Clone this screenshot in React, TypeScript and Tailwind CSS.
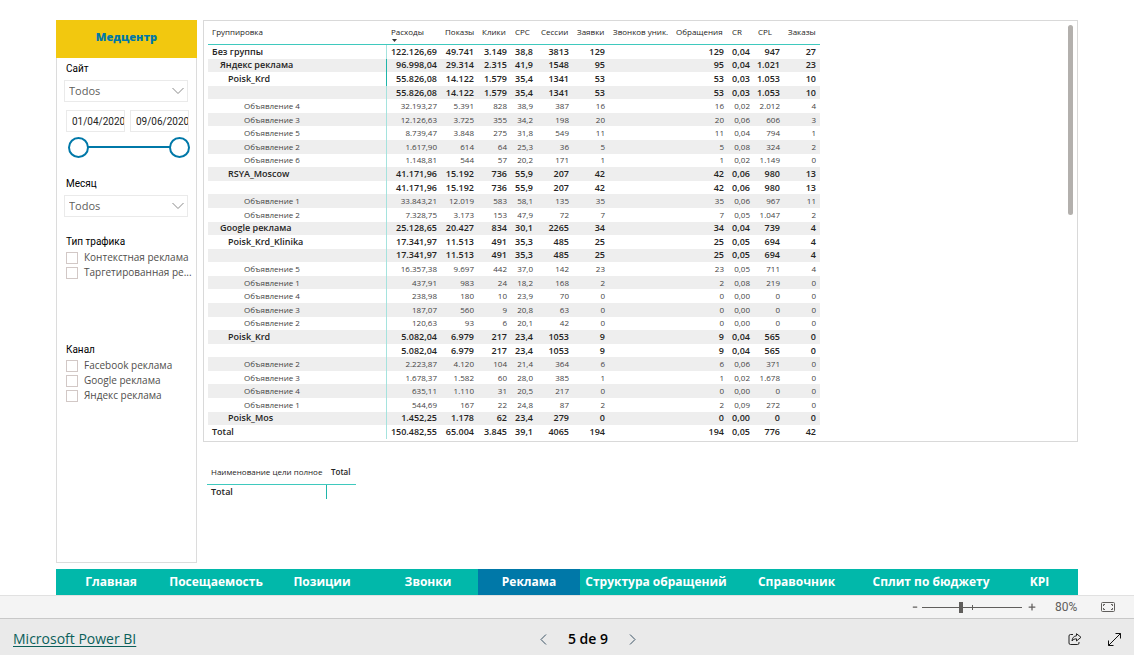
import React, { useState } from 'react';
import clsx from 'clsx';
import { Minus, Plus } from 'lucide-react';

const COLUMNS = [
    'Расходы',
    'Показы',
    'Клики',
    'CPC',
    'Сессии',
    'Заявки',
    'Звонков уник.',
    'Обращения',
    'CR',
    'CPL',
    'Заказы',
];

const COLUMN_WIDTHS = [
    'w-[179px]',
    'w-[54px]',
    'w-[37px]',
    'w-[33px]',
    'w-[26px]',
    'w-[36px]',
    'w-[36px]',
    'w-[63px]',
    'w-[56px]',
    'w-[26px]',
    'w-[30px]',
    'w-[36px]',
];

type Row = { level: number; name: string; values: string };

// level 0..2 are group rows, 3 is an unnamed subtotal, 4 is an ad
const ROWS: Row[] = [
    { level: 0, name: 'Без группы', values: '122.126,69 49.741 3.149 38,8 3813 129 - 129 0,04 947 27' },
    { level: 1, name: 'Яндекс реклама', values: '96.998,04 29.314 2.315 41,9 1548 95 - 95 0,04 1.021 23' },
    { level: 2, name: 'Poisk_Krd', values: '55.826,08 14.122 1.579 35,4 1341 53 - 53 0,03 1.053 10' },
    { level: 3, name: '', values: '55.826,08 14.122 1.579 35,4 1341 53 - 53 0,03 1.053 10' },
    { level: 4, name: 'Объявление 4', values: '32.193,27 5.391 828 38,9 387 16 - 16 0,02 2.012 4' },
    { level: 4, name: 'Объявление 3', values: '12.126,63 3.725 355 34,2 198 20 - 20 0,06 606 3' },
    { level: 4, name: 'Объявление 5', values: '8.739,47 3.848 275 31,8 549 11 - 11 0,04 794 1' },
    { level: 4, name: 'Объявление 2', values: '1.617,90 614 64 25,3 36 5 - 5 0,08 324 2' },
    { level: 4, name: 'Объявление 6', values: '1.148,81 544 57 20,2 171 1 - 1 0,02 1.149 0' },
    { level: 2, name: 'RSYA_Moscow', values: '41.171,96 15.192 736 55,9 207 42 - 42 0,06 980 13' },
    { level: 3, name: '', values: '41.171,96 15.192 736 55,9 207 42 - 42 0,06 980 13' },
    { level: 4, name: 'Объявление 1', values: '33.843,21 12.019 583 58,1 135 35 - 35 0,06 967 11' },
    { level: 4, name: 'Объявление 2', values: '7.328,75 3.173 153 47,9 72 7 - 7 0,05 1.047 2' },
    { level: 1, name: 'Google реклама', values: '25.128,65 20.427 834 30,1 2265 34 - 34 0,04 739 4' },
    { level: 2, name: 'Poisk_Krd_Klinika', values: '17.341,97 11.513 491 35,3 485 25 - 25 0,05 694 4' },
    { level: 3, name: '', values: '17.341,97 11.513 491 35,3 485 25 - 25 0,05 694 4' },
    { level: 4, name: 'Объявление 5', values: '16.357,38 9.697 442 37,0 142 23 - 23 0,05 711 4' },
    { level: 4, name: 'Объявление 1', values: '437,91 983 24 18,2 168 2 - 2 0,08 219 0' },
    { level: 4, name: 'Объявление 4', values: '238,98 180 10 23,9 70 0 - 0 0,00 0 0' },
    { level: 4, name: 'Объявление 3', values: '187,07 560 9 20,8 63 0 - 0 0,00 0 0' },
    { level: 4, name: 'Объявление 2', values: '120,63 93 6 20,1 42 0 - 0 0,00 0 0' },
    { level: 2, name: 'Poisk_Krd', values: '5.082,04 6.979 217 23,4 1053 9 - 9 0,04 565 0' },
    { level: 3, name: '', values: '5.082,04 6.979 217 23,4 1053 9 - 9 0,04 565 0' },
    { level: 4, name: 'Объявление 2', values: '2.223,87 4.120 104 21,4 364 6 - 6 0,06 371 0' },
    { level: 4, name: 'Объявление 3', values: '1.678,37 1.582 60 28,0 385 1 - 1 0,02 1.678 0' },
    { level: 4, name: 'Объявление 4', values: '635,11 1.110 31 20,5 217 0 - 0 0,00 0 0' },
    { level: 4, name: 'Объявление 1', values: '544,69 167 22 24,8 87 2 - 2 0,09 272 0' },
    { level: 2, name: 'Poisk_Mos', values: '1.452,25 1.178 62 23,4 279 0 - 0 0,00 0 0' },
    { level: 0, name: 'Total', values: '150.482,55 65.004 3.845 39,1 4065 194 - 194 0,05 776 42' },
];

const INDENTS = ['pl-1', 'pl-3', 'pl-5', 'pl-7', 'pl-9'];

const PAGES = [
    'Главная',
    'Посещаемость',
    'Позиции',
    'Звонки',
    'Реклама',
    'Структура обращений',
    'Справочник',
    'Сплит по бюджету',
    'KPI',
];

const THUMB =
    '[&::-webkit-slider-thumb]:pointer-events-auto [&::-webkit-slider-thumb]:appearance-none [&::-webkit-slider-thumb]:size-[21px] [&::-webkit-slider-thumb]:rounded-full [&::-webkit-slider-thumb]:border-2 [&::-webkit-slider-thumb]:border-[#0078a8] [&::-webkit-slider-thumb]:bg-white';

function Dropdown({ id, label }: { id: string; label: string }) {
    return (
        <div>
            <label htmlFor={id} className="block pl-[9px] font-[Roboto,sans-serif] text-[10px] leading-[14px] text-black">{label}</label>
            <div className="relative mt-1 ml-[7px] mr-2">
                <select
                    id={id}
                    className="block h-[22px] w-full appearance-none border border-[#eaeaea] bg-white pl-1 text-[11px] leading-5 text-[#605e5c]"
                >
                    <option>Todos</option>
                </select>
                <svg
                    className="pointer-events-none absolute top-[7px] right-1 h-2 w-3"
                    viewBox="0 0 12 8"
                    fill="none"
                    stroke="#8a8a8a"
                >
                    <path d="M0.5 1 L6 6.5 L11.5 1" />
                </svg>
            </div>
        </div>
    );
}

function CheckList({ title, items }: { title: string; items: string[] }) {
    return (
        <fieldset className="min-w-0">
            <legend className="pl-[9px] font-[Roboto,sans-serif] text-[10px] leading-[14px] text-black">{title}</legend>
            <div className="pt-px pr-px pl-[9px]">
                {items.map((item) => (
                    <label key={item} className="flex h-[15px] items-center gap-[6px] text-[10px] leading-[15px] whitespace-nowrap text-[#504e4c]">
                        <input
                            type="checkbox"
                            className="size-3 shrink-0 appearance-none border border-[#d2c8c6] bg-white checked:bg-[#605e5c]"
                        />
                        {item}
                    </label>
                ))}
            </div>
        </fieldset>
    );
}

function DateRange() {
    const [from, setFrom] = useState(0);
    const [to, setTo] = useState(100);

    return (
        <div>
            <div className="flex gap-[5px] pr-[7px] pl-[9px]">
                {['01/04/2020', '09/06/2020'].map((date, i) => (
                    <input
                        key={date}
                        type="text"
                        aria-label={i === 0 ? 'Начало' : 'Конец'}
                        defaultValue={date}
                        className="h-[22px] w-0 min-w-0 flex-1 border border-[#eaeaea] pl-[5px] font-[Roboto,sans-serif] text-[10px] text-[#252423]"
                    />
                ))}
            </div>
            <div className="relative mt-1 mr-[6px] ml-[11px] h-[22px]">
                <div className="absolute inset-x-3 top-[10px] h-[2px] bg-[#0078a8]" />
                <input
                    type="range"
                    aria-label="Начало периода"
                    value={from}
                    onChange={(e) => setFrom(Math.min(Number(e.target.value), to))}
                    className={clsx('pointer-events-none absolute inset-0 w-full appearance-none bg-transparent', THUMB)}
                />
                <input
                    type="range"
                    aria-label="Конец периода"
                    value={to}
                    onChange={(e) => setTo(Math.max(Number(e.target.value), from))}
                    className={clsx('pointer-events-none absolute inset-0 w-full appearance-none bg-transparent', THUMB)}
                />
            </div>
        </div>
    );
}

function Sidebar() {
    return (
        <aside className="flex w-[141px] shrink-0 flex-col border border-t-0 border-[#dcdcdc]">
            <h1 className="-mx-px flex h-[38px] items-center justify-center bg-[#f2c80f] pb-1 text-[11px] font-extrabold text-[#0078a8]">
                Медцентр
            </h1>
            <div className="pt-1">
                <Dropdown id="site" label="Сайт" />
                <div className="mt-2">
                    <DateRange />
                </div>
                <div className="mt-[19px]">
                    <Dropdown id="month" label="Месяц" />
                </div>
                <div className="mt-[18px]">
                    <CheckList title="Тип трафика" items={['Контекстная реклама', 'Таргетированная ре...']} />
                </div>
                <div className="mt-[63px]">
                    <CheckList title="Канал" items={['Facebook реклама', 'Google реклама', 'Яндекс реклама']} />
                </div>
            </div>
        </aside>
    );
}

function CampaignTable() {
    return (
        <div className="relative border border-[#d9d9d9] px-1 pt-1 pb-[2px]">
            <table className="h-[414px] w-[612px] table-fixed border-separate border-spacing-0 text-[9px] leading-3 text-[#252423]">
                <colgroup>
                    {COLUMN_WIDTHS.map((width, i) => (
                        <col key={i} className={width} />
                    ))}
                </colgroup>
                <thead className="text-[8px]">
                    <tr className="h-5 text-left align-top whitespace-nowrap">
                        <th className="border-b border-[#3fc9be] pt-px pl-1 font-normal">Группировка</th>
                        {COLUMNS.map((name, i) => (
                            <th key={name} className="relative border-b border-[#3fc9be] pt-px pl-1 font-normal">
                                {name}
                                {i === 0 && (
                                    <svg className="absolute top-[14px] left-[5px] h-[3px] w-[5px]" viewBox="0 0 5 3" fill="#333">
                                        <path d="M0 0h5L2.5 3z" />
                                    </svg>
                                )}
                            </th>
                        ))}
                    </tr>
                </thead>
                <tbody>
                    {ROWS.map((row, i) => (
                        <tr
                            key={i}
                            className={clsx(
                                'whitespace-nowrap',
                                i % 2 === 1 && 'bg-[#eee]',
                                row.level < 4 ? 'font-semibold' : 'text-[8px] text-[#444]'
                            )}
                        >
                            <td
                                className={clsx(
                                    'border-r p-0',
                                    INDENTS[row.level],
                                    i === 1 || i === 2 ? 'border-[#1fb5aa]' : 'border-[#a5e3de]'
                                )}
                            >
                                {row.name}
                            </td>
                            {row.values.split(' ').map((value, j) => (
                                <td key={j} className="p-0 pr-1 text-right">
                                    {value === '-' ? '' : value}
                                </td>
                            ))}
                        </tr>
                    ))}
                </tbody>
            </table>
            <div className="absolute top-1 right-1 h-[190px] w-[5px] rounded-full bg-[#b3b0ad]" />
        </div>
    );
}

function GoalTable() {
    return (
        <table className="mt-[23px] ml-1 w-[149px] table-fixed border-separate border-spacing-0 text-left text-[9px] leading-3 whitespace-nowrap text-[#252423]">
            <thead>
                <tr className="h-5 align-top">
                    <th className="w-[120px] border-b border-[#3fc9be] pt-px pl-1 text-[8px] font-normal">
                        Наименование цели полное
                    </th>
                    <th className="border-b border-[#3fc9be] pt-px pl-1 text-[8px] font-semibold">Total</th>
                </tr>
            </thead>
            <tbody>
                <tr className="h-[14px]">
                    <td className="border-r border-[#1fb5aa] p-0 pl-1 font-semibold">Total</td>
                    <td />
                </tr>
            </tbody>
        </table>
    );
}

function PageTabs() {
    return (
        <nav className="mx-14 mt-[6px] grid h-[26px] grid-cols-[110fr_100fr_112fr_100fr_102fr_152fr_129fr_140fr_77fr] bg-[#01b8aa]">
            {PAGES.map((page) => (
                <button
                    key={page}
                    type="button"
                    className={clsx(
                        'text-[12px] leading-4 font-bold whitespace-nowrap text-white',
                        page === 'Реклама' && 'bg-[#0078a8]'
                    )}
                >
                    {page}
                </button>
            ))}
        </nav>
    );
}

function ZoomBar() {
    const [zoom, setZoom] = useState(39);

    return (
        <div className="flex h-6 items-center justify-end border-t border-b border-t-[#e1e1e1] border-b-[#c8c8c8] bg-[#f4f4f4] pr-[19px] text-[#605e5c]">
            <button type="button" aria-label="Уменьшить">
                <Minus className="h-2 w-[6px]" strokeWidth={5} />
            </button>
            <div className="relative mx-1 h-3 w-[100px]">
                <div className="absolute top-[6px] h-px w-full bg-[#605e5c]" />
                <div className="absolute top-1 left-[50px] h-[5px] w-px bg-[#605e5c]" />
                <input
                    type="range"
                    aria-label="Масштаб"
                    value={zoom}
                    onChange={(e) => setZoom(Number(e.target.value))}
                    className="absolute inset-0 w-full appearance-none bg-transparent [&::-webkit-slider-thumb]:h-[11px] [&::-webkit-slider-thumb]:w-1 [&::-webkit-slider-thumb]:appearance-none [&::-webkit-slider-thumb]:bg-[#605e5c]"
                />
            </div>
            <button type="button" aria-label="Увеличить" className="ml-px">
                <Plus className="size-[10px]" strokeWidth={3} />
            </button>
            <span className="ml-[18px] w-[26px] font-[Roboto,sans-serif] text-[12px] leading-4">80%</span>
            <button type="button" aria-label="По размеру страницы" className="ml-5">
                <svg className="h-[10px] w-[14px]" viewBox="0 0 14 10" fill="none" stroke="#605e5c">
                    <rect x="0.5" y="0.5" width="13" height="9" rx="1" />
                    <path d="M4 2.5H2.5V4M2.5 6V7.5H4M10 2.5H11.5V4M11.5 6V7.5H10" />
                </svg>
            </button>
        </div>
    );
}

function Footer() {
    return (
        <footer className="grid h-9 grid-cols-3 items-center bg-[#eaeaea] pt-1 pr-[13px] pl-[13px]">
            <a href="#" className="text-[14px] leading-5 text-[#0b5f5a] underline underline-offset-2">
                Microsoft Power BI
            </a>
            <div className="flex items-center justify-center pl-[42px] text-[14px] leading-5 font-semibold text-black">
                <button type="button" aria-label="Предыдущая страница">
                    <svg className="h-[11px] w-[7px]" viewBox="0 0 7 11" fill="none" stroke="#3b5364">
                        <path d="M6 0.5L1 5.5L6 10.5" />
                    </svg>
                </button>
                <span className="w-[82px] text-center">5 de 9</span>
                <button type="button" aria-label="Следующая страница">
                    <svg className="h-[11px] w-[7px]" viewBox="0 0 7 11" fill="none" stroke="#3b5364">
                        <path d="M1 0.5L6 5.5L1 10.5" />
                    </svg>
                </button>
            </div>
            <div className="flex items-center justify-end gap-[26px]">
                <button type="button" aria-label="Поделиться">
                    <svg className="h-3 w-[14px]" viewBox="0 0 14 12" fill="none" stroke="#222" strokeLinejoin="round">
                        <path d="M5 1.5H2.5a1.5 1.5 0 0 0-1.500 1.500v7a1.500 1.500 0 0 0 1.500 1.500h7a1.500 1.500 0 0 0 1.500-1.500V9" />
                        <path d="M8.500 0.700L13 4.300L8.500 8V5.800C6.500 5.800 5 6.500 4 8C4.200 5 5.800 3 8.500 2.800Z" />
                    </svg>
                </button>
                <button type="button" aria-label="Во весь экран">
                    <svg className="size-[13px]" viewBox="0 0 13 13" fill="none" stroke="#111">
                        <path d="M7.500 0.500H12.500V5.500M12.500 0.500L0.500 12.500M0.500 7.500V12.500H5.500" />
                    </svg>
                </button>
            </div>
        </footer>
    );
}

export default function App() {
    return (
        <div className="flex min-h-screen flex-col bg-white font-['Open_Sans','Noto_Sans',sans-serif]">
            <main className="flex flex-1 gap-[6px] px-14 pt-5">
                <Sidebar />
                <div className="min-w-0 flex-1">
                    <CampaignTable />
                    <GoalTable />
                </div>
            </main>
            <PageTabs />
            <ZoomBar />
            <Footer />
        </div>
    );
}
